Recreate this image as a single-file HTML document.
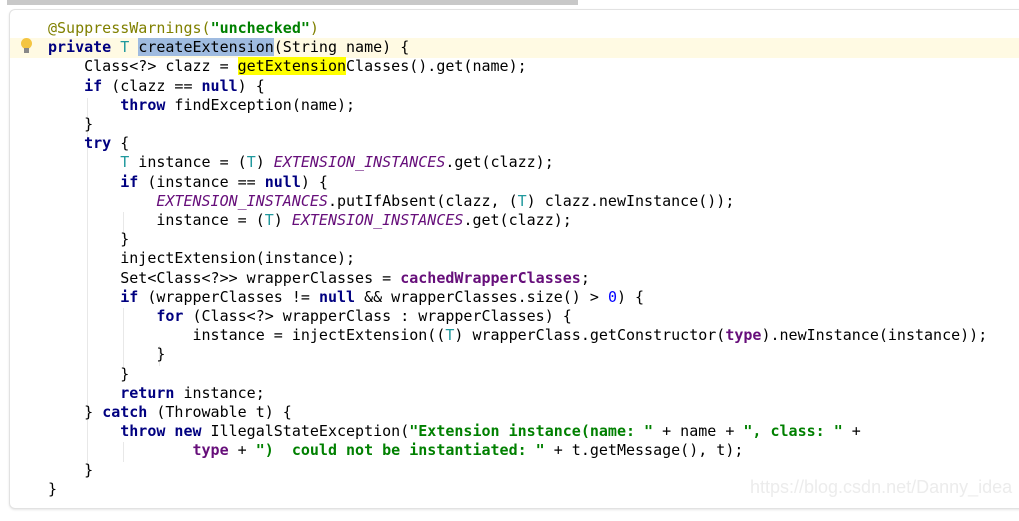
<!DOCTYPE html>
<html><head><meta charset="utf-8"><style>
html,body{margin:0;padding:0;background:#fff;width:1019px;height:521px;overflow:hidden;position:relative}
.bar{position:absolute;left:7px;top:0;width:571px;height:5px;background:#c8c8c8}
.panel{position:absolute;left:9px;top:9px;width:1014px;height:498px;border:1px solid #e2e2e2;border-radius:6px;box-shadow:0 1px 2px #e6e6e6;background:#fff}
.hl{position:absolute;left:10px;top:38px;width:1009px;height:20px;background:#fffae3}
pre{position:absolute;left:48px;top:19px;margin:0;font-family:"DejaVu Sans Mono","Liberation Mono",monospace;font-size:15px;line-height:19.2px;color:#000}
.k{color:#000080;font-weight:bold}.s{color:#008000;font-weight:bold}.a{color:#808000}.t{color:#20999d}
.c{color:#660e7a;font-style:italic}.f{color:#660e7a;font-weight:bold}
.sel{background:#9fbbe0;color:#000}
.y{background:#ffff00}
.g{position:absolute;width:1px;background:#e8e8e8}
.wm{position:absolute;left:750px;top:477px;font-family:"Liberation Sans",sans-serif;font-size:18px;color:#ececec}
.bulb{position:absolute;left:21px;top:38px;width:11px;height:11px;border-radius:50%;background:#f4c542}
.bulb2{position:absolute;left:24px;top:48px;width:5px;height:5px;background:#888}
</style></head><body>
<div class="bar"></div>
<div class="panel"></div>
<div class="hl"></div>
<div class="bulb"></div><div class="bulb2"></div>
<div class="g" style="left:87px;top:98px;height:380px"></div>
<div class="g" style="left:123px;top:212px;height:25px"></div>
<div class="g" style="left:123px;top:308px;height:60px"></div>
<div class="g" style="left:159px;top:346px;height:20px"></div>
<div class="g" style="left:123px;top:442px;height:20px"></div>
<pre><span class="a">@SuppressWarnings(</span><span class="s">"unchecked"</span><span class="a">)</span>
<span class="k">private</span> <span class="t">T</span> <span class="sel">createExtension</span>(String name) {
    Class&lt;?&gt; clazz = <span class="y">getExtension</span>Classes().get(name);
    <span class="k">if</span> (clazz == <span class="k">null</span>) {
        <span class="k">throw</span> findException(name);
    }
    <span class="k">try</span> {
        <span class="t">T</span> instance = (<span class="t">T</span>) <span class="c">EXTENSION_INSTANCES</span>.get(clazz);
        <span class="k">if</span> (instance == <span class="k">null</span>) {
            <span class="c">EXTENSION_INSTANCES</span>.putIfAbsent(clazz, (<span class="t">T</span>) clazz.newInstance());
            instance = (<span class="t">T</span>) <span class="c">EXTENSION_INSTANCES</span>.get(clazz);
        }
        injectExtension(instance);
        Set&lt;Class&lt;?&gt;&gt; wrapperClasses = <span class="f">cachedWrapperClasses</span>;
        <span class="k">if</span> (wrapperClasses != <span class="k">null</span> &amp;&amp; wrapperClasses.size() &gt; <span style="color:#0000ff">0</span>) {
            <span class="k">for</span> (Class&lt;?&gt; wrapperClass : wrapperClasses) {
                instance = injectExtension((<span class="t">T</span>) wrapperClass.getConstructor(<span class="f">type</span>).newInstance(instance));
            }
        }
        <span class="k">return</span> instance;
    } <span class="k">catch</span> (Throwable t) {
        <span class="k">throw new</span> IllegalStateException(<span class="s">"Extension instance(name: "</span> + name + <span class="s">", class: "</span> +
                <span class="f">type</span> + <span class="s">")  could not be instantiated: "</span> + t.getMessage(), t);
    }
}</pre>
<div class="wm">https://blog.csdn.net/Danny_idea</div>
</body></html>
